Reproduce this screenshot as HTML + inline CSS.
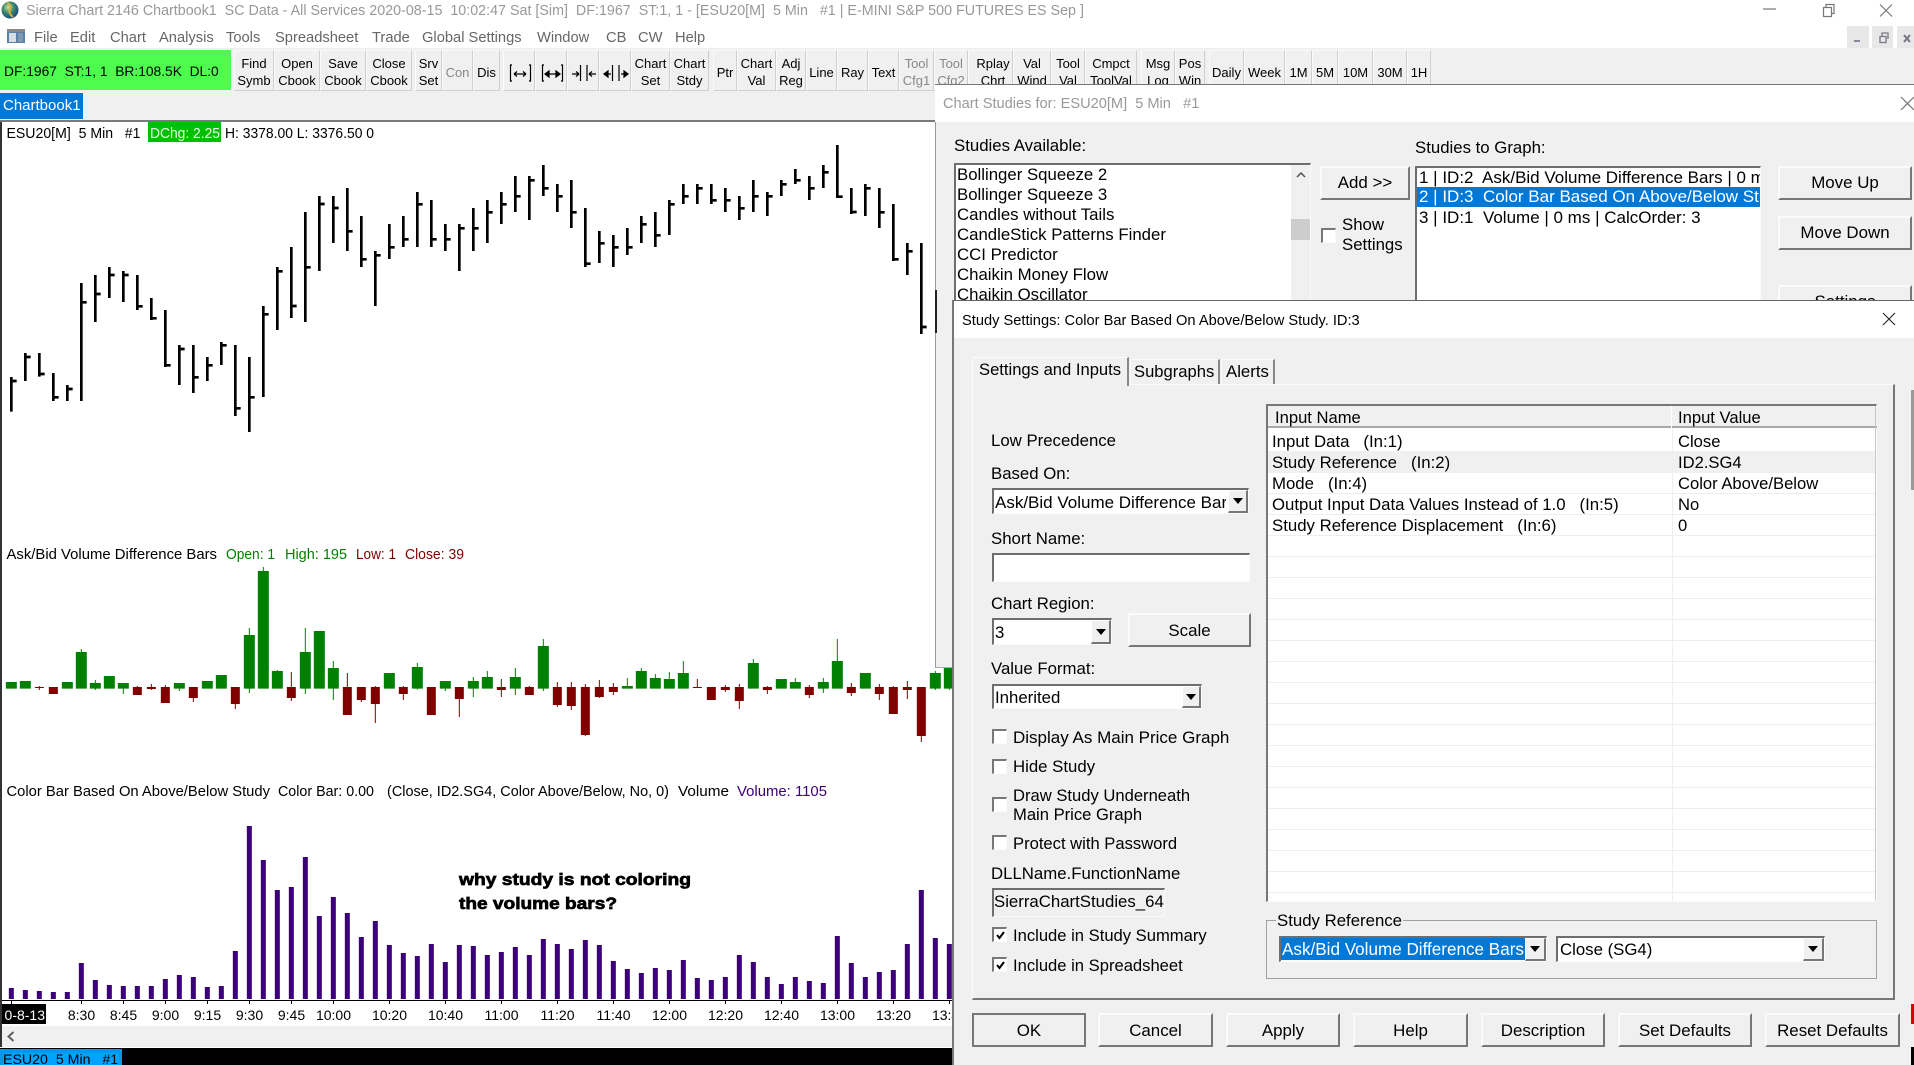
<!DOCTYPE html>
<html><head><meta charset="utf-8"><title>Sierra Chart</title>
<style>
*{box-sizing:border-box}
html,body{margin:0;padding:0;width:1914px;height:1065px;overflow:hidden;background:#fff;font-family:"Liberation Sans",sans-serif;color:#000}
div{position:absolute}
svg text{white-space:pre}
.t{white-space:pre;line-height:20px;font-size:16.8px;height:20px}
.x{font-size:17px}
.y{font-size:16.6px}
.m{white-space:pre;line-height:20px;font-size:14.7px;height:20px;color:#666;top:28px}
.c{white-space:pre;line-height:18px;font-size:14px;height:18px}
.tb{top:50px;height:41px;padding-top:3px;background:#f0f0f0;border:1px solid;border-color:#fafafa #cfcfcf #cfcfcf #fafafa;font-size:13px;line-height:17px;text-align:center;display:flex;align-items:center;justify-content:center;white-space:pre;overflow:hidden}
.g{color:#888}
.r{background:#f0f0f0;border-style:solid;border-width:2px 2px 2px 2px;border-color:#fbfbfb #777 #777 #fbfbfb;text-align:center;font-size:16.9px;padding-top:1px;display:flex;align-items:center;justify-content:center;white-space:pre}
.u{padding-top:0;padding-bottom:1px}
.s{background:#fff;border-style:solid;border-width:2px 1px 1px 2px;border-color:#6e6e6e #fafafa #fafafa #6e6e6e}
.a{background:#f0f0f0;border-style:solid;border-width:1px 2px 2px 1px;border-color:#fff #777 #777 #fff}
.a:after{content:"";position:absolute;left:50%;top:50%;margin:-3px 0 0 -5px;border-style:solid;border-width:6px 5px 0 5px;border-color:#000 transparent transparent transparent}
.k{width:15px;height:15px;background:#fff;border-style:solid;border-width:2px 1px 1px 2px;border-color:#777 #fafafa #fafafa #777;left:992px}
.k svg{position:absolute;left:1px;top:1px}
</style></head><body>

<!-- title bar -->
<svg style="position:absolute;left:0;top:0" width="1914" height="50">
<defs><radialGradient id="gl" cx=".4" cy=".35" r=".7"><stop offset="0" stop-color="#cfe0a0"/><stop offset=".45" stop-color="#3f8f6f"/><stop offset="1" stop-color="#12407f"/></radialGradient></defs>
<circle cx="10" cy="10" r="8.5" fill="url(#gl)"/><path d="M7 3q5 2 3 6t3 8" stroke="#d8b040" stroke-width="2" fill="none"/>
<path d="M1763 9h13" stroke="#777" stroke-width="1.2"/>
<path d="M1823.5 7.5h8v9h-8zM1826 7.5V4.5h8v9h-2.500" stroke="#777" stroke-width="1.2" fill="none"/>
<path d="M1880 4.500l12 12M1892 4.500l-12 12" stroke="#777" stroke-width="1.200"/>
<rect x="7" y="29" width="18" height="14" fill="#5a7fa8"/><rect x="7" y="29" width="18" height="3" fill="#888"/><rect x="9" y="33" width="7" height="9" fill="#d8dde2"/><rect x="18" y="33" width="5" height="9" fill="#8098b0"/>
<rect x="1847" y="26" width="22" height="22" fill="#e8e8e8"/><rect x="1872" y="26" width="21" height="22" fill="#e8e8e8"/><rect x="1897" y="26" width="17" height="22" fill="#e8e8e8"/>
<path d="M1854 41h6" stroke="#889" stroke-width="2"/><path d="M1880 36.500h6v6h-6zM1882 36v-3h6v6" stroke="#778" stroke-width="1.300" fill="none"/><path d="M1904 35l6 7M1910 35l-6 7" stroke="#778" stroke-width="2"/>
</svg>
<div class="t" style="left:26px;top:1px;font-size:14.3px;color:#999">Sierra Chart 2146 Chartbook1  SC Data - All Services 2020-08-15  10:02:47 Sat [Sim]  DF:1967  ST:1, 1 - [ESU20[M]  5 Min   #1 | E-MINI S&amp;P 500 FUTURES ES Sep ]</div>

<!-- menu -->
<div class="m" style="left:34px">File</div><div class="m" style="left:70px">Edit</div><div class="m" style="left:110px">Chart</div><div class="m" style="left:159px">Analysis</div><div class="m" style="left:226px">Tools</div><div class="m" style="left:275px">Spreadsheet</div><div class="m" style="left:372px">Trade</div><div class="m" style="left:422px">Global Settings</div><div class="m" style="left:537px">Window</div><div class="m" style="left:606px">CB</div><div class="m" style="left:638px">CW</div><div class="m" style="left:675px">Help</div>

<!-- toolbar band -->
<div style="left:0;top:48px;width:1914px;height:73px;background:#f0f0f0"></div>
<div style="left:0;top:50px;width:231px;height:40px;background:#4dfc4d"></div>
<div class="t" style="left:4px;top:62px;font-size:13.8px">DF:1967  ST:1, 1  BR:108.5K  DL:0</div>

<div class="tb" style="left:234px;width:40px">Find
Symb</div><div class="tb" style="left:274px;width:46px">Open
Cbook</div><div class="tb" style="left:320px;width:46px">Save
Cbook</div><div class="tb" style="left:366px;width:46px">Close
Cbook</div>
<div class="tb" style="left:415px;width:27px">Srv
Set</div><div class="tb g" style="left:442px;width:31px">Con</div><div class="tb" style="left:473px;width:27px">Dis</div>
<div class="tb" style="left:503px;width:32px"></div><div class="tb" style="left:535px;width:32px"></div><div class="tb" style="left:567px;width:32px"></div><div class="tb" style="left:599px;width:32px"></div>
<div class="tb" style="left:631px;width:39px">Chart
Set</div><div class="tb" style="left:670px;width:39px">Chart
Stdy</div>
<div class="tb" style="left:713px;width:24px">Ptr</div><div class="tb" style="left:737px;width:39px">Chart
Val</div><div class="tb" style="left:776px;width:30px">Adj
Reg</div><div class="tb" style="left:806px;width:31px">Line</div><div class="tb" style="left:837px;width:31px">Ray</div><div class="tb" style="left:868px;width:31px">Text</div><div class="tb g" style="left:899px;width:35px">Tool
Cfg1</div><div class="tb g" style="left:934px;width:34px">Tool
Cfg2</div>
<div class="tb" style="left:968px;width:45px;padding-left:5px">Rplay
Chrt</div><div class="tb" style="left:1013px;width:38px">Val
Wind</div><div class="tb" style="left:1051px;width:34px">Tool
Val</div><div class="tb" style="left:1085px;width:52px">Cmpct
ToolVal</div>
<div class="tb" style="left:1141px;width:34px">Msg
Log</div><div class="tb" style="left:1175px;width:30px">Pos
Win</div>
<div class="tb" style="left:1209px;width:35px">Daily</div><div class="tb" style="left:1244px;width:41px">Week</div><div class="tb" style="left:1285px;width:27px">1M</div><div class="tb" style="left:1312px;width:26px">5M</div><div class="tb" style="left:1338px;width:35px">10M</div><div class="tb" style="left:1373px;width:34px">30M</div><div class="tb" style="left:1407px;width:24px">1H</div>
<svg style="position:absolute;left:503px;top:50px" width="128" height="41" fill="none" stroke="#000" stroke-width="1.200">
<path d="M9 15h-1.500v16H9M26 15h1.500v16H26M11 24h12M11 24l3-2.500M11 24l3 2.500M23 24l-3-2.500M23 24l-3 2.500"/>
<path d="M41 15h-1.500v16H41M58 15h1.500v16H58M43 24h12" /><path d="M42 24l4-3v6zM57 24l-4-3v6z" fill="#000"/>
<path d="M77.500 15v16M84 15v16M69 24h7M93 24h-7M76 24l-3-2.500M76 24l-3 2.500M86 24l3-2.500M86 24l3 2.500"/>
<path d="M109.500 15v16M116 15v16M101 24h7M125 24h-7"/><path d="M101 24l4-3v6zM125 24l-4-3v6z" fill="#000"/>
</svg>
<div style="left:0;top:93px;width:83px;height:26px;background:#0078d7"></div>
<div class="t" style="left:3px;top:96px;font-size:15px;color:#fff">Chartbook1</div>

<!-- chart -->
<div style="left:0;top:120px;width:952px;height:2px;background:#7a7a7a"></div>
<svg style="position:absolute;left:0;top:122px;overflow:hidden" width="952" height="904" viewBox="0 122 952 904">
<rect x="0" y="122" width="952" height="904" fill="#fff"/>
<g transform="translate(0,120) scale(.33333)" fill="none" stroke="#000" stroke-width="8">
<path d="M34 771V875M34 783H50M76 699V783M76 711H92M118 699V770M118 762H134M160 759V843M160 832H176M202 795V843M202 807H218M244 489V843M244 547H260M286 465V606M286 522H302M328 441V534M328 465H344M370 453V546M370 465H386M412 465V570M412 559H428M454 534V600M454 595H470M496 570V741M496 736H512M538 675V795M538 687H554M580 675V819M580 772H596M622 711V783M622 736H638M664 666V735M664 676H680M706 675V888M706 865H722M748 711V936M748 832H764M790 558V831M790 583H806M832 441V630M832 454H848M874 381V594M874 558H890M916 276V606M916 442H932M958 228V453M958 252H974M1000 228V369M1000 264H1016M1042 204V393M1042 334H1058M1084 288V441M1084 418H1100M1126 393V558M1126 406H1142M1168 312V417M1168 382H1184M1210 288V381M1210 358H1226M1252 216V381M1252 253H1268M1294 240V381M1294 358H1310M1336 312V393M1336 358H1352M1378 312V453M1378 325H1394M1420 264V393M1420 325H1436"/>
</g>
<g transform="translate(480,120) scale(.33333)" fill="none" stroke="#000" stroke-width="8">
<path d="M22 240V369M22 277H38M64 216V312M64 253H80M106 168V276M106 229H122M148 168V300M148 181H164M190 135V228M190 205H206M232 192V276M232 229H248M274 180V324M274 277H290M316 264V441M316 431H332M358 333V429M358 370H374M400 345V441M400 382H416M442 324V405M442 382H458M484 288V369M484 313H500M526 276V381M526 346H542M568 240V345M568 253H584M610 192V252M610 229H626M652 192V252M652 205H668M694 192V252M694 241H710M736 204V276M736 241H752M778 228V300M778 265H794M820 180V276M820 229H836M862 216V288M862 229H878M904 180V228M904 193H920M946 147V192M946 181H962M988 168V240M988 205H1004M1030 135V204M1030 157H1046M1072 75V234M1072 230H1088M1114 204V282M1114 276H1130M1156 192V288M1156 205H1172M1198 204V324M1198 277H1214M1240 252V423M1240 418H1256M1282 369V465M1282 394H1298M1324 369V642M1324 621H1340"/>
</g>
<g transform="translate(0,530) scale(.33333)" fill="none">
<path stroke="#008000" stroke-width="33" d="M34 456V476M76 453V476M202 456V476M244 366V476M286 459V476M328 438V476M370 459V476M538 459V476M622 453V476M664 435V476M748 315V476M790 123V476M832 423V476M916 366V476M958 303V476M1000 414V476M1168 429V476M1252 411V476M1336 453V476M1420 453V476"/>
<path stroke="#008000" stroke-width="3" d="M244 357V366M286 450V480M370 476V492M538 476V483M748 294V489M790 111V123M832 420V423M916 294V492M1000 393V510M1252 399V479M1336 476V483M1420 441V501"/>
<path stroke="#800000" stroke-width="27" d="M118 471V474M160 471V492M412 471V495M454 471V477M496 471V519M580 471V504M706 471V522M874 471V504M1042 471V555M1084 471V510M1126 471V522M1210 471V492M1294 471V555M1378 471V507"/>
<path stroke="#800000" stroke-width="3" d="M118 468V480M412 468V471M454 462V480M496 465V471M580 504V516M706 522V537M874 426V513M1042 429V471M1084 510V516M1126 468V579M1210 468V510M1378 507V561"/>
</g>
<g transform="translate(480,530) scale(.33333)" fill="none">
<path stroke="#008000" stroke-width="33" d="M22 441V476M106 441V476M190 348V476M442 468V476M484 423V476M526 444V476M568 447V476M610 429V476M820 399V476M904 447V476M946 456V476M1030 456V476M1072 393V476M1156 429V476M1366 429V476M1408 411V476"/>
<path stroke="#008000" stroke-width="3" d="M22 423V441M106 414V495M190 327V483M442 444V468M484 414V423M526 432V444M568 426V447M610 393V429M820 387V399M946 444V456M1030 444V489M1072 327V393M1366 423V480M1408 476V480"/>
<path stroke="#800000" stroke-width="27" d="M64 471V480M148 471V495M232 471V525M274 471V528M316 471V615M358 471V501M400 471V486M652 471V474M694 471V510M736 471V480M778 471V513M862 471V480M988 471V495M1114 471V489M1198 471V492M1240 471V552M1282 471V480M1324 471V618"/>
<path stroke="#800000" stroke-width="3" d="M64 447V501M148 468V471M232 456V531M274 456V540M316 462V618M358 450V504M400 459V495M652 447V474M736 465V486M778 462V537M862 468V492M988 465V504M1114 459V498M1198 462V510M1240 468V471M1282 453V507M1324 618V636"/>
</g>
<g transform="translate(0,780) scale(.33333)" fill="none" stroke="#3c0078" stroke-width="15">
<path d="M34 624V657M76 630V657M118 633V657M160 636V657M202 636V657M244 549V657M286 600V657M328 615V657M370 618V657M412 618V657M454 618V657M496 597V657M538 585V657M580 591V657M622 621V657M664 618V657M706 513V657M748 138V657M790 240V657M832 330V657M874 321V657M916 231V657M958 408V657M1000 351V657M1042 399V657M1084 471V657M1126 423V657M1168 495V657M1210 519V657M1252 528V657M1294 492V657M1336 546V657M1378 495V657M1420 498V657"/>
</g>
<g transform="translate(480,780) scale(.33333)" fill="none" stroke="#3c0078" stroke-width="15">
<path d="M22 525V657M64 516V657M106 501V657M148 525V657M190 477V657M232 492V657M274 507V657M316 480V657M358 495V657M400 543V657M442 567V657M484 579V657M526 564V657M568 570V657M610 540V657M652 594V657M694 600V657M736 591V657M778 525V657M820 546V657M862 591V657M904 612V657M946 591V657M988 603V657M1030 609V657M1072 468V657M1114 549V657M1156 591V657M1198 576V657M1240 570V657M1282 492V657M1324 330V657M1366 474V657M1408 492V657"/>
</g>
<path d="M2 1000.500H952M11.500 1000v4M81.500 1000v4M123.500 1000v4M165.500 1000v4M207.500 1000v4M249.500 1000v4M291.500 1000v4M333.500 1000v4M389.500 1000v4M445.500 1000v4M501.500 1000v4M557.500 1000v4M613.500 1000v4M669.500 1000v4M725.500 1000v4M781.500 1000v4M837.500 1000v4M893.500 1000v4M949.500 1000v4" stroke="#000" stroke-width="1" fill="none"/>
<rect x="2" y="1004" width="44" height="20" fill="#000"/>
<text x="45" y="1020" text-anchor="end" fill="#fff" font-size="14" font-family="Liberation Sans">0-8-13</text>
<g font-family="Liberation Sans" font-size="14" text-anchor="middle">
<text x="81.500" y="1020">8:30</text><text x="123.500" y="1020">8:45</text><text x="165.500" y="1020">9:00</text><text x="207.500" y="1020">9:15</text><text x="249.500" y="1020">9:30</text><text x="291.500" y="1020">9:45</text><text x="333.500" y="1020">10:00</text><text x="389.500" y="1020">10:20</text><text x="445.500" y="1020">10:40</text><text x="501.500" y="1020">11:00</text><text x="557.500" y="1020">11:20</text><text x="613.500" y="1020">11:40</text><text x="669.500" y="1020">12:00</text><text x="725.500" y="1020">12:20</text><text x="781.500" y="1020">12:40</text><text x="837.500" y="1020">13:00</text><text x="893.500" y="1020">13:20</text><text x="949.500" y="1020">13:40</text>
</g>
<g font-family="Liberation Sans" font-size="14.500">
<text x="6.500" y="138" textLength="134" lengthAdjust="spacingAndGlyphs">ESU20[M]  5 Min   #1</text>
<rect x="148" y="122" width="73" height="20" fill="#00c000"/>
<text x="150" y="138" fill="#e8ffe8" textLength="70" lengthAdjust="spacingAndGlyphs">DChg: 2.25</text>
<text x="225" y="138" textLength="149" lengthAdjust="spacingAndGlyphs">H: 3378.00 L: 3376.50 0</text>
<text x="6.500" y="559" textLength="210.500" lengthAdjust="spacingAndGlyphs">Ask/Bid Volume Difference Bars</text>
<text x="226" y="559" fill="#008000" textLength="49" lengthAdjust="spacingAndGlyphs">Open: 1</text>
<text x="285" y="559" fill="#008000" textLength="62" lengthAdjust="spacingAndGlyphs">High: 195</text>
<text x="356" y="559" fill="#800000" textLength="40" lengthAdjust="spacingAndGlyphs">Low: 1</text>
<text x="405" y="559" fill="#800000" textLength="59" lengthAdjust="spacingAndGlyphs">Close: 39</text>
<text x="6.500" y="796" textLength="263.500" lengthAdjust="spacingAndGlyphs">Color Bar Based On Above/Below Study</text>
<text x="278" y="796" textLength="96" lengthAdjust="spacingAndGlyphs">Color Bar: 0.00</text>
<text x="387" y="796" textLength="282" lengthAdjust="spacingAndGlyphs">(Close, ID2.SG4, Color Above/Below, No, 0)</text>
<text x="678" y="796" textLength="51" lengthAdjust="spacingAndGlyphs">Volume</text>
<text x="737" y="796" fill="#3c0078" textLength="90" lengthAdjust="spacingAndGlyphs">Volume: 1105</text>
</g>
<g font-family="Liberation Sans" font-size="17" font-weight="bold" stroke="#000" stroke-width=".7">
<text x="459" y="885" textLength="232" lengthAdjust="spacingAndGlyphs">why study is not coloring</text>
<text x="459" y="909" textLength="158" lengthAdjust="spacingAndGlyphs">the volume bars?</text>
</g>
</svg>
<div style="left:0;top:122px;width:2px;height:925px;background:#333"></div>

<!-- scrollbar + tabs -->
<div style="left:2px;top:1026px;width:950px;height:21px;background:#f0f0f0"></div>
<svg style="position:absolute;left:5px;top:1030px" width="12" height="14"><path d="M8.500 2L3.500 6.500L8.500 11" fill="none" stroke="#606060" stroke-width="2"/></svg>
<div style="left:0;top:1048px;width:952px;height:17px;background:#000"></div>
<div style="left:0;top:1049px;width:122px;height:16px;background:#0098e8"></div>
<div style="left:3px;top:1053px;width:116px;height:12px;background:#00a4ff;overflow:hidden"><div class="c" style="left:0;top:-2px;font-size:14.200px">ESU20  5 Min   #1</div></div>

<!-- chart studies dialog -->
<div style="left:935px;top:84px;width:979px;height:584px;background:#f0f0f0;border-left:1px solid #999;border-bottom:1px solid #aaa"></div>
<div style="left:935px;top:84px;width:979px;height:38px;background:#fff;border-top:1px solid #777"></div>
<div style="left:934.500px;top:290px;width:2px;height:43px;background:#222"></div>
<div class="t" style="left:943px;top:94px;font-size:14.600px;color:#999">Chart Studies for: ESU20[M]  5 Min   #1</div>
<svg style="position:absolute;left:1900px;top:96px" width="14" height="14"><path d="M1 1L14 14M14 1L1 14" stroke="#777" stroke-width="1.200"/></svg>
<div class="t" style="left:954px;top:136px">Studies Available:</div>
<div class="t" style="left:1415px;top:138px">Studies to Graph:</div>
<div class="s" style="left:954px;top:163px;width:357px;height:145px;overflow:hidden">
<div style="left:335px;top:0;width:20px;height:140px;background:#f0f0f0"></div>
<div style="left:335px;top:54px;width:20px;height:21px;background:#cdcdcd"></div>
<svg style="position:absolute;left:340px;top:6px" width="10" height="8"><path d="M1 6L5 2L9 6" fill="none" stroke="#505050" stroke-width="1.500"/></svg>
<div class="t" style="left:1px;top:0">Bollinger Squeeze 2</div>
<div class="t" style="left:1px;top:20px">Bollinger Squeeze 3</div>
<div class="t" style="left:1px;top:40px">Candles without Tails</div>
<div class="t" style="left:1px;top:60px">CandleStick Patterns Finder</div>
<div class="t" style="left:1px;top:80px">CCI Predictor</div>
<div class="t" style="left:1px;top:100px">Chaikin Money Flow</div>
<div class="t" style="left:1px;top:120px">Chaikin Oscillator</div>
</div>
<div class="r u" style="left:1320px;top:166px;width:90px;height:34px">Add &gt;&gt;</div>
<div class="k" style="left:1321px;top:228px"></div>
<div class="t" style="left:1342px;top:215px">Show</div>
<div class="t" style="left:1342px;top:235px">Settings</div>
<div class="s" style="left:1415px;top:166px;width:346px;height:142px;overflow:hidden">
<div class="t x" style="left:2px;top:0">1 | ID:2  Ask/Bid Volume Difference Bars | 0 ms | CalcOrder: 1</div>
<div style="left:0;top:19px;width:344px;height:20px;background:#0078d7"></div>
<div class="t x" style="left:2px;top:19px;color:#fff">2 | ID:3  Color Bar Based On Above/Below Study | 0 ms</div>
<div class="t x" style="left:2px;top:40px">3 | ID:1  Volume | 0 ms | CalcOrder: 3</div>
</div>
<div class="r u" style="left:1778px;top:166px;width:134px;height:34px">Move Up</div>
<div class="r u" style="left:1778px;top:216px;width:134px;height:34px">Move Down</div>
<div class="r u" style="left:1778px;top:285px;width:134px;height:34px">Settings</div>

<!-- study settings dialog -->
<div style="left:952px;top:300px;width:962px;height:765px;background:#f0f0f0;border-left:2px solid #777;border-top:1px solid #666"></div>
<div style="left:954px;top:301px;width:960px;height:37px;background:#fff"></div>
<div class="t" style="left:962px;top:311px;font-size:14.650px">Study Settings: Color Bar Based On Above/Below Study. ID:3</div>
<svg style="position:absolute;left:1882px;top:312px" width="14" height="14"><path d="M1 1L13 13M13 1L1 13" stroke="#222" stroke-width="1.100"/></svg>

<div style="left:972px;top:384px;width:923px;height:616px;border-style:solid;border-width:1px 2px 2px 1px;border-color:#fbfbfb #777 #777 #fbfbfb"></div>
<div style="left:972px;top:357px;width:157px;height:29px;background:#f0f0f0;border-style:solid;border-width:1px 2px 0 1px;border-color:#fbfbfb #888 #888 #fbfbfb"></div>
<div class="t y" style="left:979px;top:360px">Settings and Inputs</div>
<div style="left:1130px;top:359px;width:90px;height:25px;border-style:solid;border-width:1px 2px 0 1px;border-color:#fbfbfb #888 #888 #fbfbfb"></div>
<div class="t y" style="left:1134px;top:362px">Subgraphs</div>
<div style="left:1221px;top:359px;width:54px;height:25px;border-style:solid;border-width:1px 2px 0 1px;border-color:#fbfbfb #888 #888 #fbfbfb"></div>
<div class="t" style="left:1226px;top:362px">Alerts</div>

<div class="t" style="left:991px;top:431px">Low Precedence</div>
<div class="t" style="left:991px;top:464px">Based On:</div>
<div class="s" style="left:992px;top:488px;width:257px;height:26px"></div>
<div class="t x" style="left:995px;top:493px;width:231px;overflow:hidden">Ask/Bid Volume Difference Bars</div>
<div class="a" style="left:1228px;top:490px;width:20px;height:23px"></div>
<div class="t" style="left:991px;top:529px">Short Name:</div>
<div class="s" style="left:992px;top:553px;width:258px;height:29px"></div>
<div class="t" style="left:991px;top:594px">Chart Region:</div>
<div class="s" style="left:992px;top:618px;width:120px;height:27px"></div>
<div class="t" style="left:995px;top:623px">3</div>
<div class="a" style="left:1091px;top:620px;width:20px;height:24px"></div>
<div class="r" style="left:1128px;top:613px;width:123px;height:34px">Scale</div>
<div class="t" style="left:991px;top:659px">Value Format:</div>
<div class="s" style="left:992px;top:684px;width:210px;height:25px"></div>
<div class="t" style="left:995px;top:688px">Inherited</div>
<div class="a" style="left:1182px;top:686px;width:19px;height:22px"></div>

<div class="k" style="top:729px"></div><div class="t x" style="left:1013px;top:728px">Display As Main Price Graph</div>
<div class="k" style="top:759px"></div><div class="t" style="left:1013px;top:757px">Hide Study</div>
<div class="k" style="top:797px"></div><div class="t y" style="left:1013px;top:786px">Draw Study Underneath</div><div class="t y" style="left:1013px;top:805px">Main Price Graph</div>
<div class="k" style="top:835px"></div><div class="t y" style="left:1013px;top:834px">Protect with Password</div>
<div class="t" style="left:991px;top:864px">DLLName.FunctionName</div>
<div class="s" style="left:992px;top:888px;width:173px;height:29px;background:#f0f0f0"></div>
<div class="t" style="left:994px;top:892px">SierraChartStudies_64</div>
<div class="k" style="top:927px"><svg width="11" height="11"><path d="M2 5l2.500 3L9 2" fill="none" stroke="#000" stroke-width="2"/></svg></div><div class="t y" style="left:1013px;top:926px">Include in Study Summary</div>
<div class="k" style="top:957px"><svg width="11" height="11"><path d="M2 5l2.500 3L9 2" fill="none" stroke="#000" stroke-width="2"/></svg></div><div class="t y" style="left:1013px;top:956px">Include in Spreadsheet</div>

<!-- table -->
<div style="left:1266px;top:404px;width:611px;height:498px;background:#fff;border-style:solid;border-width:2px 1px 1px 2px;border-color:#777 #fafafa #fafafa #777"></div>
<div style="left:1268px;top:406px;width:609px;height:22px;background:#f0f0f0;border-bottom:2px solid #a8a8a8"></div>
<div style="left:1671px;top:406px;width:1px;height:22px;background:#fff"></div>
<div style="left:1875px;top:406px;width:1px;height:495px;background:#c8c8c8"></div>
<div class="t y" style="left:1275px;top:408px">Input Name</div>
<div class="t y" style="left:1678px;top:408px">Input Value</div>
<div style="left:1268px;top:451px;width:607px;height:22px;background:#f0f0f0"></div>
<div style="left:1268px;top:473px;width:607px;height:428px;background:repeating-linear-gradient(to bottom,#fff 0,#fff 20px,#eee 20px,#eee 21px)"></div>
<div style="left:1672px;top:428px;width:1px;height:473px;background:#eee"></div>
<div class="t" style="left:1272px;top:432px">Input Data   (In:1)</div><div class="t y" style="left:1678px;top:432px">Close</div>
<div class="t" style="left:1272px;top:453px">Study Reference   (In:2)</div><div class="t y" style="left:1678px;top:453px">ID2.SG4</div>
<div class="t" style="left:1272px;top:474px">Mode   (In:4)</div><div class="t y" style="left:1678px;top:474px">Color Above/Below</div>
<div class="t" style="left:1272px;top:495px">Output Input Data Values Instead of 1.0   (In:5)</div><div class="t y" style="left:1678px;top:495px">No</div>
<div class="t" style="left:1272px;top:516px">Study Reference Displacement   (In:6)</div><div class="t y" style="left:1678px;top:516px">0</div>

<!-- study reference group -->
<div style="left:1266px;top:920px;width:611px;height:59px;border:1px solid #a0a0a0"></div>
<div class="t" style="left:1276px;top:911px;background:#f0f0f0;padding:0 1px">Study Reference</div>
<div class="s" style="left:1279px;top:936px;width:268px;height:26px"></div>
<div style="left:1281px;top:938px;width:244px;height:22px;background:#0078d7"></div>
<div class="t" style="left:1282px;top:940px;width:243px;overflow:hidden;color:#fff;font-size:17.100px">Ask/Bid Volume Difference Bars</div>
<div class="a" style="left:1525px;top:938px;width:21px;height:23px"></div>
<div class="s" style="left:1556px;top:936px;width:269px;height:26px"></div>
<div class="t" style="left:1560px;top:940px">Close (SG4)</div>
<div class="a" style="left:1803px;top:938px;width:21px;height:23px"></div>

<!-- bottom buttons -->
<div class="r" style="left:972px;top:1013px;width:114px;height:34px;border-color:#777">OK</div>
<div class="r" style="left:1098px;top:1013px;width:115px;height:34px">Cancel</div>
<div class="r" style="left:1226px;top:1013px;width:114px;height:34px">Apply</div>
<div class="r" style="left:1353px;top:1013px;width:115px;height:34px">Help</div>
<div class="r" style="left:1481px;top:1013px;width:124px;height:34px">Description</div>
<div class="r" style="left:1618px;top:1013px;width:134px;height:34px">Set Defaults</div>
<div class="r" style="left:1765px;top:1013px;width:135px;height:34px">Reset Defaults</div>
<div style="left:1911px;top:1004px;width:3px;height:20px;background:#e00000"></div>
<div style="left:1911px;top:1047px;width:3px;height:18px;background:#000"></div>
<div style="left:1911px;top:390px;width:3px;height:100px;background:#999"></div>
</body></html>
